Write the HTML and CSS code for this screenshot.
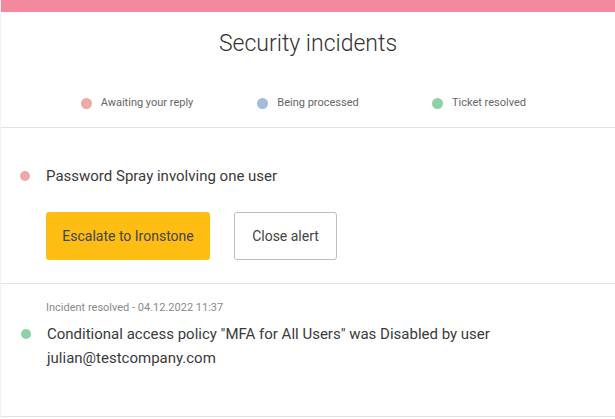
FILE: index.html
```html
<!DOCTYPE html>
<html>
<head>
<meta charset="utf-8">
<link rel="stylesheet" href="styles.css">
</head>
<body>
<div class="card">
  <div class="topbar"></div>
  <header class="head">
    <h1 class="title">Security incidents</h1>
    <div class="legend">
      <div class="legend-item"><span class="dot dot-pink"></span><span>Awaiting your reply</span></div>
      <div class="legend-item"><span class="dot dot-blue"></span><span>Being processed</span></div>
      <div class="legend-item"><span class="dot dot-green"></span><span>Ticket resolved</span></div>
    </div>
  </header>
  <section class="incident incident-open">
    <div class="row">
      <span class="dot dot-pink"></span>
      <p class="text">Password Spray involving one user</p>
    </div>
    <div class="actions">
      <button class="btn btn-primary">Escalate to Ironstone</button>
      <button class="btn btn-outline">Close alert</button>
    </div>
  </section>
  <section class="incident incident-done">
    <p class="meta">Incident resolved - 04.12.2022 11:37</p>
    <div class="row row-top">
      <span class="dot dot-green"></span>
      <p class="text">Conditional access policy "MFA for All Users" was Disabled by user julian@testcompany.com</p>
    </div>
  </section>
</div>
</body>
</html>
```

FILE: styles.css
```css
* { box-sizing: border-box; }
html, body { margin: 0; padding: 0; background: #fff; }
body {
  font-family: Roboto, "Liberation Sans", sans-serif;
  color: #3a3a3a;
}
.card {
  width: 615px;
  border-left: 1px solid #f0f0f6;
  min-height: 419px;
}
.topbar {
  height: 12px;
  background: #f1899f;
}
.head {
  border-bottom: 1px solid #e2e2e2;
  padding: 17px 0 17px;
}
.title {
  margin: 0;
  text-align: center;
  font-size: 23px;
  font-weight: 300;
  line-height: 30px;
  color: #333;
}
.legend {
  margin-top: 37px;
  display: grid;
  grid-template-columns: repeat(3, 171px);
  justify-content: center;
  justify-items: center;
}
.legend-item {
  display: flex;
  align-items: center;
  gap: 9px;
  font-size: 11px;
  color: #666;
  line-height: 14px;
}
.legend-item .dot { width: 11px; height: 11px; }
.dot {
  display: inline-block;
  width: 10px;
  height: 10px;
  border-radius: 50%;
  flex: none;
}
.dot-pink { background: #eea9a9; }
.dot-blue { background: #a2bcda; }
.dot-green { background: #8ed3a8; }
.incident {
  border-bottom: 1px solid #e2e2e2;
}
.incident-open {
  padding: 36px 0 24px 19px;
  height: 156px;
}
.row {
  display: flex;
  align-items: center;
  gap: 16px;
}
.row-top { align-items: flex-start; }
.row-top .dot { margin-top: 7px; }
.text {
  margin: 0;
  font-size: 15px;
  line-height: 24px;
  color: #3a3a3a;
}
.actions {
  display: flex;
  gap: 24px;
  margin-top: 24px;
  padding-left: 26px;
}
.btn {
  font-family: inherit;
  font-size: 14px;
  color: #444;
  height: 48px;
  border-radius: 3px;
  cursor: pointer;
}
.btn-primary {
  width: 164px;
  background: #fdbd12;
  border: none;
}
.btn-outline {
  width: 103px;
  background: #fff;
  border: 1px solid #bdbdbd;
}
.incident-done {
  padding: 17px 60px 0 20px;
  height: 133px;
}
.meta {
  margin: 0 0 7px 25px;
  font-size: 11px;
  line-height: 14px;
  color: #8a8a8a;
}
```
